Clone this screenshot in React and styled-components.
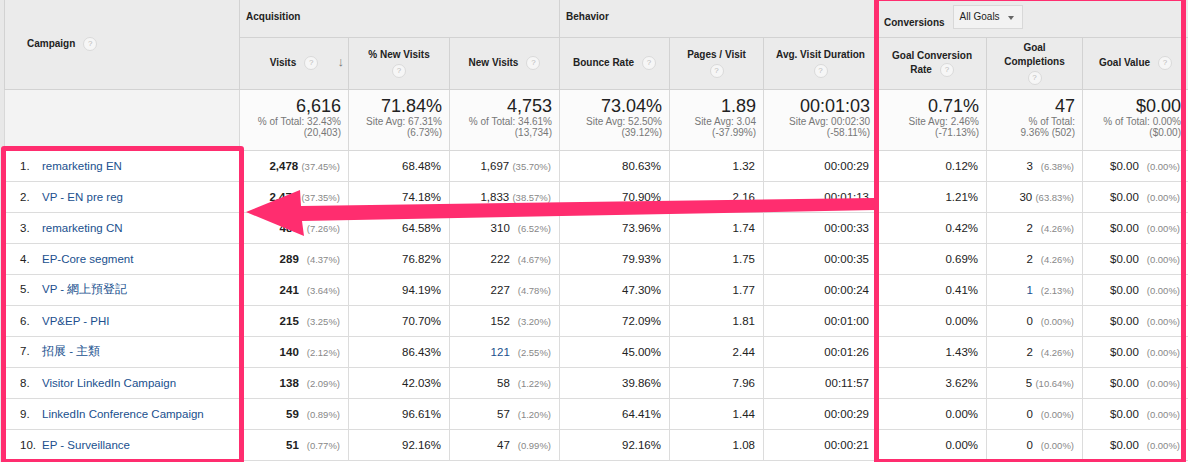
import styled, { createGlobalStyle } from 'styled-components';

const Global = createGlobalStyle`
  body { margin: 0; font-family: "Liberation Sans", Arial, sans-serif; background: #fff; }
`;

const cols = [235, 109, 101, 110, 110, 94, 114, 109, 96, 106];

const summary = [
  ['6,616', '% of Total: 32.43%', '(20,403)'],
  ['71.84%', 'Site Avg: 67.31%', '(6.73%)'],
  ['4,753', '% of Total: 34.61%', '(13,734)'],
  ['73.04%', 'Site Avg: 52.50%', '(39.12%)'],
  ['1.89', 'Site Avg: 3.04', '(-37.99%)'],
  ['00:01:03', 'Site Avg: 00:02:30', '(-58.11%)'],
  ['0.71%', 'Site Avg: 2.46%', '(-71.13%)'],
  ['47', '% of Total:', '9.36% (502)'],
  ['$0.00', '% of Total: 0.00%', '($0.00)'],
];

const rows = [
  ['remarketing EN', '2,478', '37.45%', '68.48%', '1,697', '35.70%', '80.63%', '1.32', '00:00:29', '0.12%', '3', '6.38%'],
  ['VP - EN pre reg', '2,471', '37.35%', '74.18%', '1,833', '38.57%', '70.90%', '2.16', '00:01:13', '1.21%', '30', '63.83%'],
  ['remarketing CN', '480', '7.26%', '64.58%', '310', '6.52%', '73.96%', '1.74', '00:00:33', '0.42%', '2', '4.26%'],
  ['EP-Core segment', '289', '4.37%', '76.82%', '222', '4.67%', '79.93%', '1.75', '00:00:35', '0.69%', '2', '4.26%'],
  ['VP - 網上預登記', '241', '3.64%', '94.19%', '227', '4.78%', '47.30%', '1.77', '00:00:24', '0.41%', '1', '2.13%', 'goal'],
  ['VP&EP - PHI', '215', '3.25%', '70.70%', '152', '3.20%', '72.09%', '1.81', '00:01:00', '0.00%', '0', '0.00%'],
  ['招展 - 主類', '140', '2.12%', '86.43%', '121', '2.55%', '45.00%', '2.44', '00:01:26', '1.43%', '2', '4.26%', 'new'],
  ['Visitor LinkedIn Campaign', '138', '2.09%', '42.03%', '58', '1.22%', '39.86%', '7.96', '00:11:57', '3.62%', '5', '10.64%'],
  ['LinkedIn Conference Campaign', '59', '0.89%', '96.61%', '57', '1.20%', '64.41%', '1.44', '00:00:29', '0.00%', '0', '0.00%'],
  ['EP - Surveillance', '51', '0.77%', '92.16%', '47', '0.99%', '92.16%', '1.08', '00:00:21', '0.00%', '0', '0.00%'],
];

const Page = styled.div`
  position: relative;
  width: 1188px;
  height: 462px;
  overflow: hidden;
  padding-left: 4px;
  box-sizing: border-box;
  background: linear-gradient(to right, #e8e8e8 4px, #fff 4px);
`;

const Table = styled.table`
  border-collapse: collapse;
  table-layout: fixed;
  width: 1184px;
  font-size: 11px;
  color: #222;
`;

const GroupTh = styled.th`
  height: 37px;
  box-sizing: border-box;
  background: #ebebeb;
  border: 1px solid #d2d2d2;
  border-top: none;
  text-align: left;
  vertical-align: top;
  padding: 11px 6px 0;
  font-size: 10px;
  font-weight: bold;
`;

const CampTh = styled(GroupTh)`
  vertical-align: middle;
  padding: 0 0 0 22px;
`;

const SubTh = styled.th`
  height: 52px;
  box-sizing: border-box;
  background: #ebebeb;
  border: 1px solid #d2d2d2;
  text-align: center;
  font-size: 10px;
  font-weight: bold;
  padding: 0 6px;
  line-height: 14px;
  position: relative;
`;

const Help = styled.span`
  display: inline-block;
  width: 12px;
  height: 12px;
  border-radius: 50%;
  background: #f6f6f6;
  border: 1px solid #dadada;
  color: #bbb;
  font-size: 8px;
  line-height: 12px;
  text-align: center;
  margin-left: 8px;
  vertical-align: middle;
  font-weight: normal;
`;

const BlockHelp = styled(Help)`
  display: block;
  margin: 2px auto 0;
`;

const SortArrow = styled.span`
  position: absolute;
  right: 4px;
  top: 17px;
  color: #777;
  font-size: 13px;
  font-weight: bold;
`;

const Select = styled.span`
  display: inline-block;
  margin-left: 8px;
  padding: 5px 22px 6px 6px;
  border: 1px solid #d8d8d8;
  background: #f2f2f2;
  font-weight: normal;
  font-size: 10px;
  position: relative;
  top: -6px;
  &::after {
    content: '';
    position: absolute;
    right: 8px;
    top: 10px;
    border: 3px solid transparent;
    border-top: 4px solid #666;
  }
`;

const SumTd = styled.td`
  height: 61px;
  box-sizing: border-box;
  border: 1px solid #d8d8d8;
  background: ${p => (p.$label ? '#f3f3f3' : '#fbfbfb')};
  text-align: right;
  padding: 6px 7px 0;
  vertical-align: top;
`;

const Big = styled.div`
  font-size: 18px;
  line-height: 20px;
  color: #222;
`;

const Small = styled.div`
  font-size: 10px;
  line-height: 11px;
  color: #777;
`;

const Td = styled.td`
  height: 31px;
  box-sizing: border-box;
  border: 1px solid #dcdcdc;
  text-align: right;
  padding: 0 8px;
  white-space: nowrap;
  font-size: 11.5px;
`;

const NameTd = styled(Td)`
  text-align: left;
  padding-left: 15px;
`;

const Idx = styled.span`
  display: inline-block;
  width: 22px;
  color: #222;
`;

const Link = styled.span`
  color: #20508e;
`;

const Val = styled.span`
  color: ${p => (p.$link ? '#20508e' : '#222')};
  font-weight: ${p => (p.$bold ? 'bold' : 'normal')};
`;

const Pct = styled.span`
  color: #888;
  font-size: 9.5px;
  display: inline-block;
  min-width: 38px;
  text-align: right;
`;

const Frame = styled.div`
  position: absolute;
  border: 5px solid #ff2d6f;
  border-radius: 3px;
  box-sizing: border-box;
`;

const Arrow = styled.svg`
  position: absolute;
  left: 0;
  top: 0;
  pointer-events: none;
`;

const Pair = ({ v, p, bold, link }) => (
  <>
    <Val $bold={bold} $link={link}>{v}</Val> <Pct>({p})</Pct>
  </>
);

export default function App() {
  return (
    <Page>
      <Global />
      <Table>
        <colgroup>
          {cols.map((w, i) => <col key={i} style={{ width: w }} />)}
        </colgroup>
        <thead>
          <tr>
            <CampTh rowSpan={2}>Campaign<Help>?</Help></CampTh>
            <GroupTh colSpan={3}>Acquisition</GroupTh>
            <GroupTh colSpan={3}>Behavior</GroupTh>
            <GroupTh colSpan={3}>Conversions<Select>All Goals</Select></GroupTh>
          </tr>
          <tr>
            <SubTh>Visits<Help>?</Help><SortArrow>↓</SortArrow></SubTh>
            <SubTh>% New Visits<BlockHelp>?</BlockHelp></SubTh>
            <SubTh>New Visits<Help>?</Help></SubTh>
            <SubTh>Bounce Rate<Help>?</Help></SubTh>
            <SubTh>Pages / Visit<BlockHelp>?</BlockHelp></SubTh>
            <SubTh>Avg. Visit Duration<BlockHelp>?</BlockHelp></SubTh>
            <SubTh>Goal Conversion<br />Rate<Help>?</Help></SubTh>
            <SubTh>Goal<br />Completions<BlockHelp>?</BlockHelp></SubTh>
            <SubTh>Goal Value<Help>?</Help></SubTh>
          </tr>
        </thead>
        <tbody>
          <tr>
            <SumTd $label />
            {summary.map(([b, s1, s2], i) => (
              <SumTd key={i}><Big>{b}</Big><Small>{s1}</Small><Small>{s2}</Small></SumTd>
            ))}
          </tr>
          {rows.map((r, i) => (
            <tr key={i}>
              <NameTd><Idx>{i + 1}.</Idx><Link>{r[0]}</Link></NameTd>
              <Td><Pair v={r[1]} p={r[2]} bold /></Td>
              <Td>{r[3]}</Td>
              <Td><Pair v={r[4]} p={r[5]} link={r[12] === 'new'} /></Td>
              <Td>{r[6]}</Td>
              <Td>{r[7]}</Td>
              <Td>{r[8]}</Td>
              <Td>{r[9]}</Td>
              <Td><Pair v={r[10]} p={r[11]} link={r[12] === 'goal'} /></Td>
              <Td><Pair v="$0.00" p="0.00%" /></Td>
            </tr>
          ))}
        </tbody>
      </Table>
      <Frame style={{ left: 1, top: 146, width: 243, height: 318 }} />
      <Frame style={{ left: 874, top: -4, width: 312, height: 468 }} />
      <Arrow width="1188" height="462">
        <polygon points="874,198 875,210 302,221 304,236 246,212 300,190 301,206" fill="#ff2d6f" />
      </Arrow>
    </Page>
  );
}
